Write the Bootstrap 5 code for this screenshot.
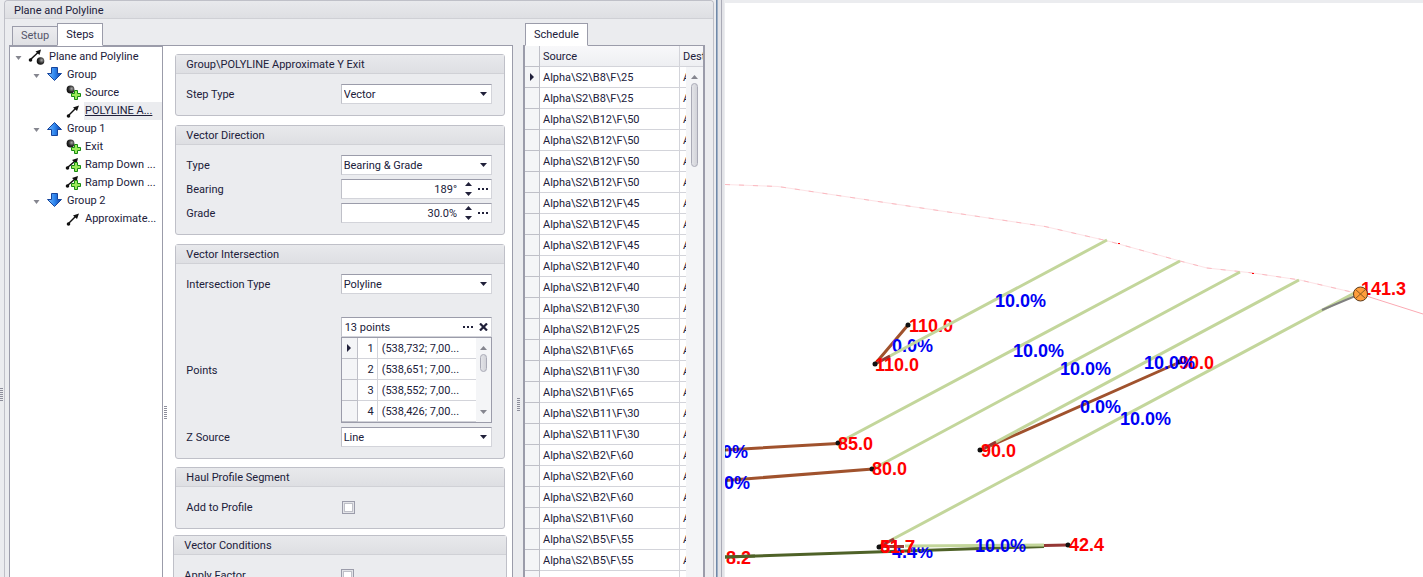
<!DOCTYPE html>
<html lang="en">
<head>
<meta charset="utf-8">
<meta name="viewport" content="width=device-width, initial-scale=1">
<title>Plane and Polyline</title>
<link href="https://cdn.jsdelivr.net/npm/bootstrap@5.3.0/dist/css/bootstrap.min.css" rel="stylesheet">
<style>
:root{--ink:#20203a;--face:#ebecef;--edge:#9b9caa;--soft:#bfc0c8;--line:#d3d4da}
body{font:11px/18px Roboto,"Noto Sans",sans-serif;color:var(--ink);background:var(--face)}
.shell{display:grid;grid-template-columns:724fr 699fr;grid-template-rows:100%}
.dock{grid-template-columns:4px 1fr 10px;grid-template-rows:100%}
.min0{min-width:0;min-height:0}
.panel{border:1px solid var(--soft);border-bottom:0;border-radius:4px 4px 0 0}
.panel-title{height:18px;line-height:19px;padding-left:9px;font-size:11px;margin:0;background:linear-gradient(#e8e9ec,#dedfe3);border-bottom:1px solid #cfd0d5;border-radius:4px 4px 0 0;font-weight:400}
.work{grid-template-columns:504fr 10px 182fr 8px;grid-template-rows:100%;padding:5px 0 0 4px}
.tabs{height:22px;padding-left:3px;margin-bottom:-1px;position:relative;z-index:1}
.tabs .tab{border:1px solid var(--edge);background:linear-gradient(#ececef,#dfe0e4);color:#55566a;height:20px;padding:0 8px;line-height:18px;font-size:11px}
.tabs .tab.active{height:23px;line-height:22px;background:#fff;color:var(--ink);border-bottom-color:#fff}
.tabs .tab+.tab{margin-left:-1px}
.tabs.single{padding-left:2px}
.pane{background:#fff;border:1px solid var(--edge);border-bottom:0}
.steps{display:grid;grid-template-columns:154fr 12px 331fr 7px;grid-template-rows:100%}
.tree{border-top:1px solid var(--edge);border-right:1px solid var(--edge);padding-top:1px;overflow:hidden}
.node{height:18px;line-height:18px;color:var(--ink);text-decoration:none}
.node .tw{width:9px;height:6px;margin:2px 5px 0 0;flex:none}
.node .ic{width:18px;height:18px;flex:none;margin-right:2px}
.node .tx{padding:0 1px}
.lv0{padding-left:4px}.lv1{padding-left:22px}.lv2{padding-left:54px}
.node.on .tx{background:var(--face);text-decoration:underline;flex:1}
.grip{width:3px;height:14px;background:repeating-linear-gradient(#8d8e9b 0 1px,transparent 1px 2px)}
.grip-dock{padding-top:388px}.grip-steps{padding:360px 0 0 1px}.grip-work{padding-top:374px}
.sect{border:1px solid var(--soft);border-radius:3px;background:var(--face);padding-bottom:11px;margin-bottom:9px}
.sect h2{font-size:11px;font-weight:400;line-height:20px;height:19px;margin:0 0 10px;padding-left:10px;background:linear-gradient(#e8e9ec,#dedfe3);border-bottom:1px solid #d0d1d6}
.sect.after{margin-bottom:8px}
.sect.wide{margin:-2px -2px 0}
.field{display:grid;grid-template-columns:155fr 152fr;align-items:center;padding:0 12px 0 10px;margin-bottom:4px;min-height:20px}
.field label{padding-top:1px}
.field:last-child{margin-bottom:0}
.field.spaced{margin-bottom:23px}
.box{height:20px;width:100%;border:1px solid var(--line);border-top-color:var(--edge);border-left-color:var(--soft);background:#fff;border-radius:0;color:var(--ink);font:inherit;font-size:11px;line-height:18px;padding:0 3px;outline:0;min-width:0}
select.box{padding:1px 2px 0;appearance:none;background:#fff url("data:image/svg+xml,%3Csvg xmlns='http://www.w3.org/2000/svg' width='7' height='4'%3E%3Cpath d='M0 0h7L3.500 4z' fill='%2320203a'/%3E%3C/svg%3E") no-repeat right 4px center}
.box input{border:0;background:none;color:inherit;font:inherit;padding:1px 0 0;outline:0;min-width:0;width:0;flex:1}
.mini{border:0;background:none;padding:0;display:flex;color:inherit}
.check{appearance:none;width:13px;height:13px;margin:0 0 0 1px;border:1px solid var(--edge);background:#fff;box-shadow:inset 0 0 0 1px #e3e4e8,inset 0 0 0 2px var(--soft);display:block}
.wide .check{margin-left:0}
.points{height:86px;border:1px solid var(--edge);background:#fff}
.cells{table-layout:fixed;border-collapse:separate;border-spacing:0;margin:0;width:100%}
.cells td,.cells th{height:21px;line-height:18px;padding:2px 0 0 4px;border-right:1px solid var(--line);border-bottom:1px solid var(--line);white-space:nowrap;overflow:hidden;font-weight:400}
.cells td:first-child,.cells th:first-child{background:#f4f5f7;border-color:var(--soft);padding:0;text-align:center}
.cells td:last-child,.cells th:last-child{border-right:0}
.cells svg{display:block;margin:0 auto}
.points .num{text-align:right;padding-right:3px}
.bar{background:#f4f5f7;flex:none}
.bar i{border:1px solid #a9aab6;background:linear-gradient(90deg,#e3e4e8,#d2d3d9);border-radius:4px}
.sched{border:2px solid var(--edge);border-top-width:1px;border-bottom:0;background:#f4f5f7}
.sched .cells th,.sched .cells td{padding-left:3px}
.sched .cells td:first-child{padding-left:0}
.sched thead th{background:linear-gradient(#f8f8fa,#eeeff2)}
.sched tbody td{background:#fff}
.sched .bar{width:17px;top:21px;right:0;bottom:0}
.rail{border-left:1px solid #6f88a8;background:linear-gradient(90deg,#9fb0c6 0 1px,#e3e4e8 1px 4px,#a9aab6 4px 5px,#e3e4e8 5px)}
.view{background:#fff;margin:3px 0 0 1px}
.view text{font:bold 18px "Liberation Sans",Arial,sans-serif}
</style>
</head>
<body class="vh-100 overflow-hidden">
<svg width="0" height="0" class="position-absolute" aria-hidden="true">
 <defs>
  <radialGradient id="ball" cx=".65" cy=".4" r=".6"><stop offset="0" stop-color="#aaa"/><stop offset=".6" stop-color="#333"/><stop offset="1" stop-color="#111"/></radialGradient>
  <linearGradient id="blue" x2="1"><stop offset="0" stop-color="#7cc0ff"/><stop offset=".5" stop-color="#2f86ee"/><stop offset="1" stop-color="#0b3fa6"/></linearGradient>
  <symbol id="vector" viewBox="0 0 18 18"><path d="M4 14 12 6" stroke="#111" stroke-width="1.500"/><path d="M15 3.500 13 9 9 5.500z" fill="#111"/><circle cx="4.500" cy="14" r="1.800" fill="#111"/></symbol>
  <symbol id="vecball" viewBox="0 0 18 18"><path d="M2 12 10 4.500" stroke="#111" stroke-width="1.500"/><path d="M13 1.500 11.500 7 7.500 3.500z" fill="#111"/><circle cx="2.500" cy="12" r="1.800" fill="#111"/><circle cx="12.500" cy="13" r="3.800" fill="url(#ball)"/></symbol>
  <symbol id="plus" viewBox="0 0 10 10"><path d="M3.500.5h3v3h3v3h-3v3h-3v-3h-3v-3h3z" fill="#9bea5a" stroke="#178a12"/></symbol>
  <symbol id="ballplus" viewBox="0 0 18 18"><circle cx="6.500" cy="5.500" r="3.900" fill="url(#ball)"/><use href="#plus" x="7" y="6" width="10" height="10"/></symbol>
  <symbol id="vecplus" viewBox="0 0 18 18"><path d="M3 12 11 5" stroke="#111" stroke-width="1.500"/><path d="M14 2 12.500 8 8 4z" fill="#111"/><circle cx="3.500" cy="12" r="1.800" fill="#111"/><use href="#plus" x="7" y="6" width="10" height="10"/></symbol>
  <symbol id="down" viewBox="0 0 18 18"><path d="M5.500 1.500h6v6h4L8.500 14.500 1.500 7.500h4z" fill="url(#blue)" stroke="#16449c"/></symbol>
  <symbol id="up" viewBox="0 0 18 18"><path d="M5.500 15.500h6v-6h4L8.500 2.500 1.500 9.500h4z" fill="url(#blue)" stroke="#16449c"/></symbol>
  <symbol id="twist" viewBox="0 0 9 6"><path d="M1.500 1h6L4.500 5z" fill="#85868f"/></symbol>
  <symbol id="here" viewBox="0 0 4 8"><path d="M0 0 4 4 0 8z" fill="#20203a"/></symbol>
  <symbol id="spin" viewBox="0 0 7 14"><path d="M0 4 3.500 0 7 4zM0 10h7L3.500 14z" fill="#20203a"/></symbol>
  <symbol id="dots" viewBox="0 0 10 2"><path d="M0 0h2v2H0zM4 0h2v2H4zM8 0h2v2H8z" fill="#20203a"/></symbol>
  <symbol id="tri-up" viewBox="0 0 7 4"><path d="M0 4 3.500 0 7 4z" fill="#85868f"/></symbol>
  <symbol id="tri-dn" viewBox="0 0 7 4"><path d="M0 0h7L3.500 4z" fill="#85868f"/></symbol>
 </defs>
</svg>
<main class="shell h-100">
 <div class="dock d-grid min0">
  <div class="grip-dock"><div class="grip"></div></div>
  <section class="panel d-flex flex-column min0">
   <h1 class="panel-title">Plane and Polyline</h1>
   <div class="work d-grid flex-fill min0">
    <div class="d-flex flex-column min0">
     <div class="tabs d-flex align-items-end" role="tablist">
      <button class="tab" role="tab" type="button">Setup</button><button class="tab active" role="tab" type="button" aria-selected="true">Steps</button>
     </div>
     <div class="pane steps flex-fill min0">
      <nav class="tree" aria-label="Steps">
       <a href="#" class="node d-flex align-items-center lv0"><svg class="tw"><use href="#twist"/></svg><svg class="ic"><use href="#vecball"/></svg><span class="tx text-truncate">Plane and Polyline</span></a>
       <a href="#" class="node d-flex align-items-center lv1"><svg class="tw"><use href="#twist"/></svg><svg class="ic"><use href="#down"/></svg><span class="tx text-truncate">Group</span></a>
       <a href="#" class="node d-flex align-items-center lv2"><svg class="ic"><use href="#ballplus"/></svg><span class="tx text-truncate">Source</span></a>
       <a href="#" class="node d-flex align-items-center lv2 on"><svg class="ic"><use href="#vector"/></svg><span class="tx text-truncate">POLYLINE A...</span></a>
       <a href="#" class="node d-flex align-items-center lv1"><svg class="tw"><use href="#twist"/></svg><svg class="ic"><use href="#up"/></svg><span class="tx text-truncate">Group 1</span></a>
       <a href="#" class="node d-flex align-items-center lv2"><svg class="ic"><use href="#ballplus"/></svg><span class="tx text-truncate">Exit</span></a>
       <a href="#" class="node d-flex align-items-center lv2"><svg class="ic"><use href="#vecplus"/></svg><span class="tx text-truncate">Ramp Down ...</span></a>
       <a href="#" class="node d-flex align-items-center lv2"><svg class="ic"><use href="#vecplus"/></svg><span class="tx text-truncate">Ramp Down ...</span></a>
       <a href="#" class="node d-flex align-items-center lv1"><svg class="tw"><use href="#twist"/></svg><svg class="ic"><use href="#down"/></svg><span class="tx text-truncate">Group 2</span></a>
       <a href="#" class="node d-flex align-items-center lv2"><svg class="ic"><use href="#vector"/></svg><span class="tx text-truncate">Approximate...</span></a>
      </nav>
      <div class="grip-steps"><div class="grip"></div></div>
      <form class="overflow-visible pt-2 min0">
       <section class="sect">
        <h2>Group\POLYLINE Approximate Y Exit</h2>
        <div class="field"><label for="stepType">Step Type</label><select class="box" id="stepType"><option>Vector</option></select></div>
       </section>
       <section class="sect">
        <h2>Vector Direction</h2>
        <div class="field"><label for="dirType">Type</label><select class="box" id="dirType"><option>Bearing &amp; Grade</option></select></div>
        <div class="field"><label for="bearing">Bearing</label><div class="box d-flex align-items-center"><input class="text-end" id="bearing" value="189°"><button class="mini ms-2" type="button" aria-label="Step bearing"><svg width="7" height="14"><use href="#spin"/></svg></button><button class="mini" type="button" aria-label="Edit bearing"><svg width="16" height="2" viewBox="-6 0 16 2"><use href="#dots" width="10" height="2"/></svg></button></div></div>
        <div class="field"><label for="grade">Grade</label><div class="box d-flex align-items-center"><input class="text-end" id="grade" value="30.0%"><button class="mini ms-2" type="button" aria-label="Step grade"><svg width="7" height="14"><use href="#spin"/></svg></button><button class="mini" type="button" aria-label="Edit grade"><svg width="16" height="2" viewBox="-6 0 16 2"><use href="#dots" width="10" height="2"/></svg></button></div></div>
       </section>
       <section class="sect after">
        <h2>Vector Intersection</h2>
        <div class="field spaced"><label for="interType">Intersection Type</label><select class="box" id="interType"><option>Polyline</option></select></div>
        <div class="field"><label for="points">Points</label>
         <div class="min0">
          <div class="box d-flex align-items-center"><input id="points" value="13 points"><button class="mini me-1" type="button" aria-label="Edit points"><svg width="12" height="2"><use href="#dots" width="10" height="2"/></svg></button><button class="mini" type="button" aria-label="Clear points"><svg width="9" height="8" viewBox="0 0 9 8"><path d="M1 .5 8 7.500M8 .5 1 7.500" stroke="#20203a" stroke-width="2.200"/></svg></button></div>
          <div class="points d-flex overflow-hidden">
           <div class="flex-fill min0">
            <table class="cells"><colgroup><col style="width:16px"><col style="width:20px"><col></colgroup>
             <tr><td><svg width="4" height="8"><use href="#here"/></svg></td><td class="num">1</td><td>(538,732; 7,00...</td></tr>
             <tr><td></td><td class="num">2</td><td>(538,651; 7,00...</td></tr>
             <tr><td></td><td class="num">3</td><td>(538,552; 7,00...</td></tr>
             <tr><td></td><td class="num">4</td><td>(538,426; 7,00...</td></tr>
            </table>
           </div>
           <div class="bar d-flex flex-column align-items-center justify-content-between px-1 py-2"><div class="d-flex flex-column align-items-center"><svg width="7" height="4"><use href="#tri-up"/></svg><i class="d-block mt-1" style="width:7px;height:18px"></i></div><svg width="7" height="4"><use href="#tri-dn"/></svg></div>
          </div>
         </div>
        </div>
        <div class="field"><label for="zSource">Z Source</label><select class="box" id="zSource"><option>Line</option></select></div>
       </section>
       <section class="sect after">
        <h2>Haul Profile Segment</h2>
        <div class="field"><label for="addProfile">Add to Profile</label><input class="check" type="checkbox" id="addProfile"></div>
       </section>
       <section class="sect wide">
        <h2>Vector Conditions</h2>
        <div class="field"><label for="applyFactor">Apply Factor</label><input class="check" type="checkbox" id="applyFactor"></div>
       </section>
      </form>
     </div>
    </div>
    <div class="grip-work d-flex justify-content-center"><div class="grip"></div></div>
    <div class="d-flex flex-column min0">
     <div class="tabs single d-flex align-items-end" role="tablist"><button class="tab active" role="tab" type="button" aria-selected="true">Schedule</button></div>
     <div class="sched flex-fill min0 position-relative overflow-hidden">
      <table class="cells"><colgroup><col style="width:15px"><col style="width:140px"><col></colgroup>
       <thead><tr><th></th><th>Source</th><th>Dest</th></tr></thead>
       <tbody>
        <tr><td><svg width="4" height="8"><use href="#here"/></svg></td><td>Alpha\S2\B8\F\25</td><td>Alpha</td></tr>
        <tr><td></td><td>Alpha\S2\B8\F\25</td><td>Alpha</td></tr>
        <tr><td></td><td>Alpha\S2\B12\F\50</td><td>Alpha</td></tr>
        <tr><td></td><td>Alpha\S2\B12\F\50</td><td>Alpha</td></tr>
        <tr><td></td><td>Alpha\S2\B12\F\50</td><td>Alpha</td></tr>
        <tr><td></td><td>Alpha\S2\B12\F\50</td><td>Alpha</td></tr>
        <tr><td></td><td>Alpha\S2\B12\F\45</td><td>Alpha</td></tr>
        <tr><td></td><td>Alpha\S2\B12\F\45</td><td>Alpha</td></tr>
        <tr><td></td><td>Alpha\S2\B12\F\45</td><td>Alpha</td></tr>
        <tr><td></td><td>Alpha\S2\B12\F\40</td><td>Alpha</td></tr>
        <tr><td></td><td>Alpha\S2\B12\F\40</td><td>Alpha</td></tr>
        <tr><td></td><td>Alpha\S2\B12\F\30</td><td>Alpha</td></tr>
        <tr><td></td><td>Alpha\S2\B12\F\25</td><td>Alpha</td></tr>
        <tr><td></td><td>Alpha\S2\B1\F\65</td><td>Alpha</td></tr>
        <tr><td></td><td>Alpha\S2\B11\F\30</td><td>Alpha</td></tr>
        <tr><td></td><td>Alpha\S2\B1\F\65</td><td>Alpha</td></tr>
        <tr><td></td><td>Alpha\S2\B11\F\30</td><td>Alpha</td></tr>
        <tr><td></td><td>Alpha\S2\B11\F\30</td><td>Alpha</td></tr>
        <tr><td></td><td>Alpha\S2\B2\F\60</td><td>Alpha</td></tr>
        <tr><td></td><td>Alpha\S2\B2\F\60</td><td>Alpha</td></tr>
        <tr><td></td><td>Alpha\S2\B2\F\60</td><td>Alpha</td></tr>
        <tr><td></td><td>Alpha\S2\B1\F\60</td><td>Alpha</td></tr>
        <tr><td></td><td>Alpha\S2\B5\F\55</td><td>Alpha</td></tr>
        <tr><td></td><td>Alpha\S2\B5\F\55</td><td>Alpha</td></tr>
        <tr><td></td><td>Alpha\S2\B5\F\55</td><td>Alpha</td></tr>
       </tbody>
      </table>
      <div class="bar position-absolute d-flex flex-column align-items-center pt-2"><svg width="7" height="4"><use href="#tri-up"/></svg><i class="d-block mt-1" style="width:7px;height:84px"></i></div>
     </div>
    </div>
   </div>
  </section>
  <div class="rail ms-auto" style="width:8px"></div>
 </div>
 <div class="view overflow-hidden">
  <svg class="d-block w-100 h-100" role="img" aria-label="Plan view">
   <g transform="translate(-725 -3)" fill="none">
    <path d="M725 184.500 778 186.500 1045 226.500 1108 241 1180 261 1207 268 1253 273 1300 280 1360 294" stroke="#fde3e6"/>
    <path d="M725 184.500 778 186.500 1045 226.500 1108 241 1180 261 1207 268 1253 273 1300 280 1360 294" stroke="#fbb9c0" stroke-dasharray="5 9"/>
    <path d="M1360 294 1423 314" stroke="#fbaab3"/><path d="M1252 273.500h2M1118 243.500h2" stroke="red"/>
    <g stroke="#a0522d" stroke-width="3"><path d="M908 325 875 364M1180 362 981 450M725 450 838 443.500M725 480.500 873 469"/></g>
    <g fill="red"><text x="909" y="332">110.0</text></g>
    <g fill="#0000f5"><text x="892" y="352">0.0%</text></g>
    <path d="M725 557 1044 546.500" stroke="#4f6228" stroke-width="3"/>
    <g fill="#0000f5"><text x="892" y="558">4.4%</text></g>
    <g stroke="#c3d69b" stroke-width="3"><path d="M875 364 1107 240M838 443 1180 261M873 469 1240 272M981 450 1299 280M880 546 1360 290M905 546 1044 545"/></g>
    <g stroke="#953735" stroke-width="3"><path d="M875 364 890 356M981 450 996 442M880 546 894 539M880 546.500H904M1044 545.500 1068 545"/></g>
    <path d="M1322 310 1360 294" stroke="#808080" stroke-width="2"/>
    <g fill="#111"><circle cx="908" cy="325" r="2.500"/><circle cx="875" cy="364" r="2.500"/><circle cx="838" cy="443" r="2.500"/><circle cx="872" cy="469" r="2.500"/><circle cx="980" cy="450" r="2.500"/><circle cx="1179" cy="362" r="2.500"/><circle cx="879" cy="547" r="2.500"/><circle cx="1068" cy="545" r="2.500"/></g>
    <g fill="#f00"><text x="875" y="371">110.0</text><text x="1179" y="369">90.0</text><text x="981" y="457">90.0</text><text x="838" y="450">85.0</text><text x="872" y="475">80.0</text><text x="880" y="553">61.7</text><text x="880" y="553">51.7</text><text x="1069" y="551">42.4</text><text x="726" y="564">8.2</text><text x="1361" y="295">141.3</text></g>
    <path d="M725 557 755 556" stroke="#4f6228" stroke-width="3"/>
    <g fill="#0000f5"><text x="995" y="307">10.0%</text><text x="1013" y="357">10.0%</text><text x="1060" y="375">10.0%</text><text x="1144" y="369">10.0%</text><text x="1080" y="413">0.0%</text><text x="1120" y="425">10.0%</text><text x="975" y="552">10.0%</text><text x="707" y="458">0.0%</text><text x="709" y="489">0.0%</text></g>
    <circle cx="1360.500" cy="294" r="7" fill="#ff9d3c" stroke="#5a3a1c"/><path d="M1355 289l11 10M1366 289l-11 10" stroke="#8a5a20"/>
   </g>
  </svg>
 </div>
</main>
<script src="https://cdn.jsdelivr.net/npm/bootstrap@5.3.0/dist/js/bootstrap.bundle.min.js"></script>
</body>
</html>
